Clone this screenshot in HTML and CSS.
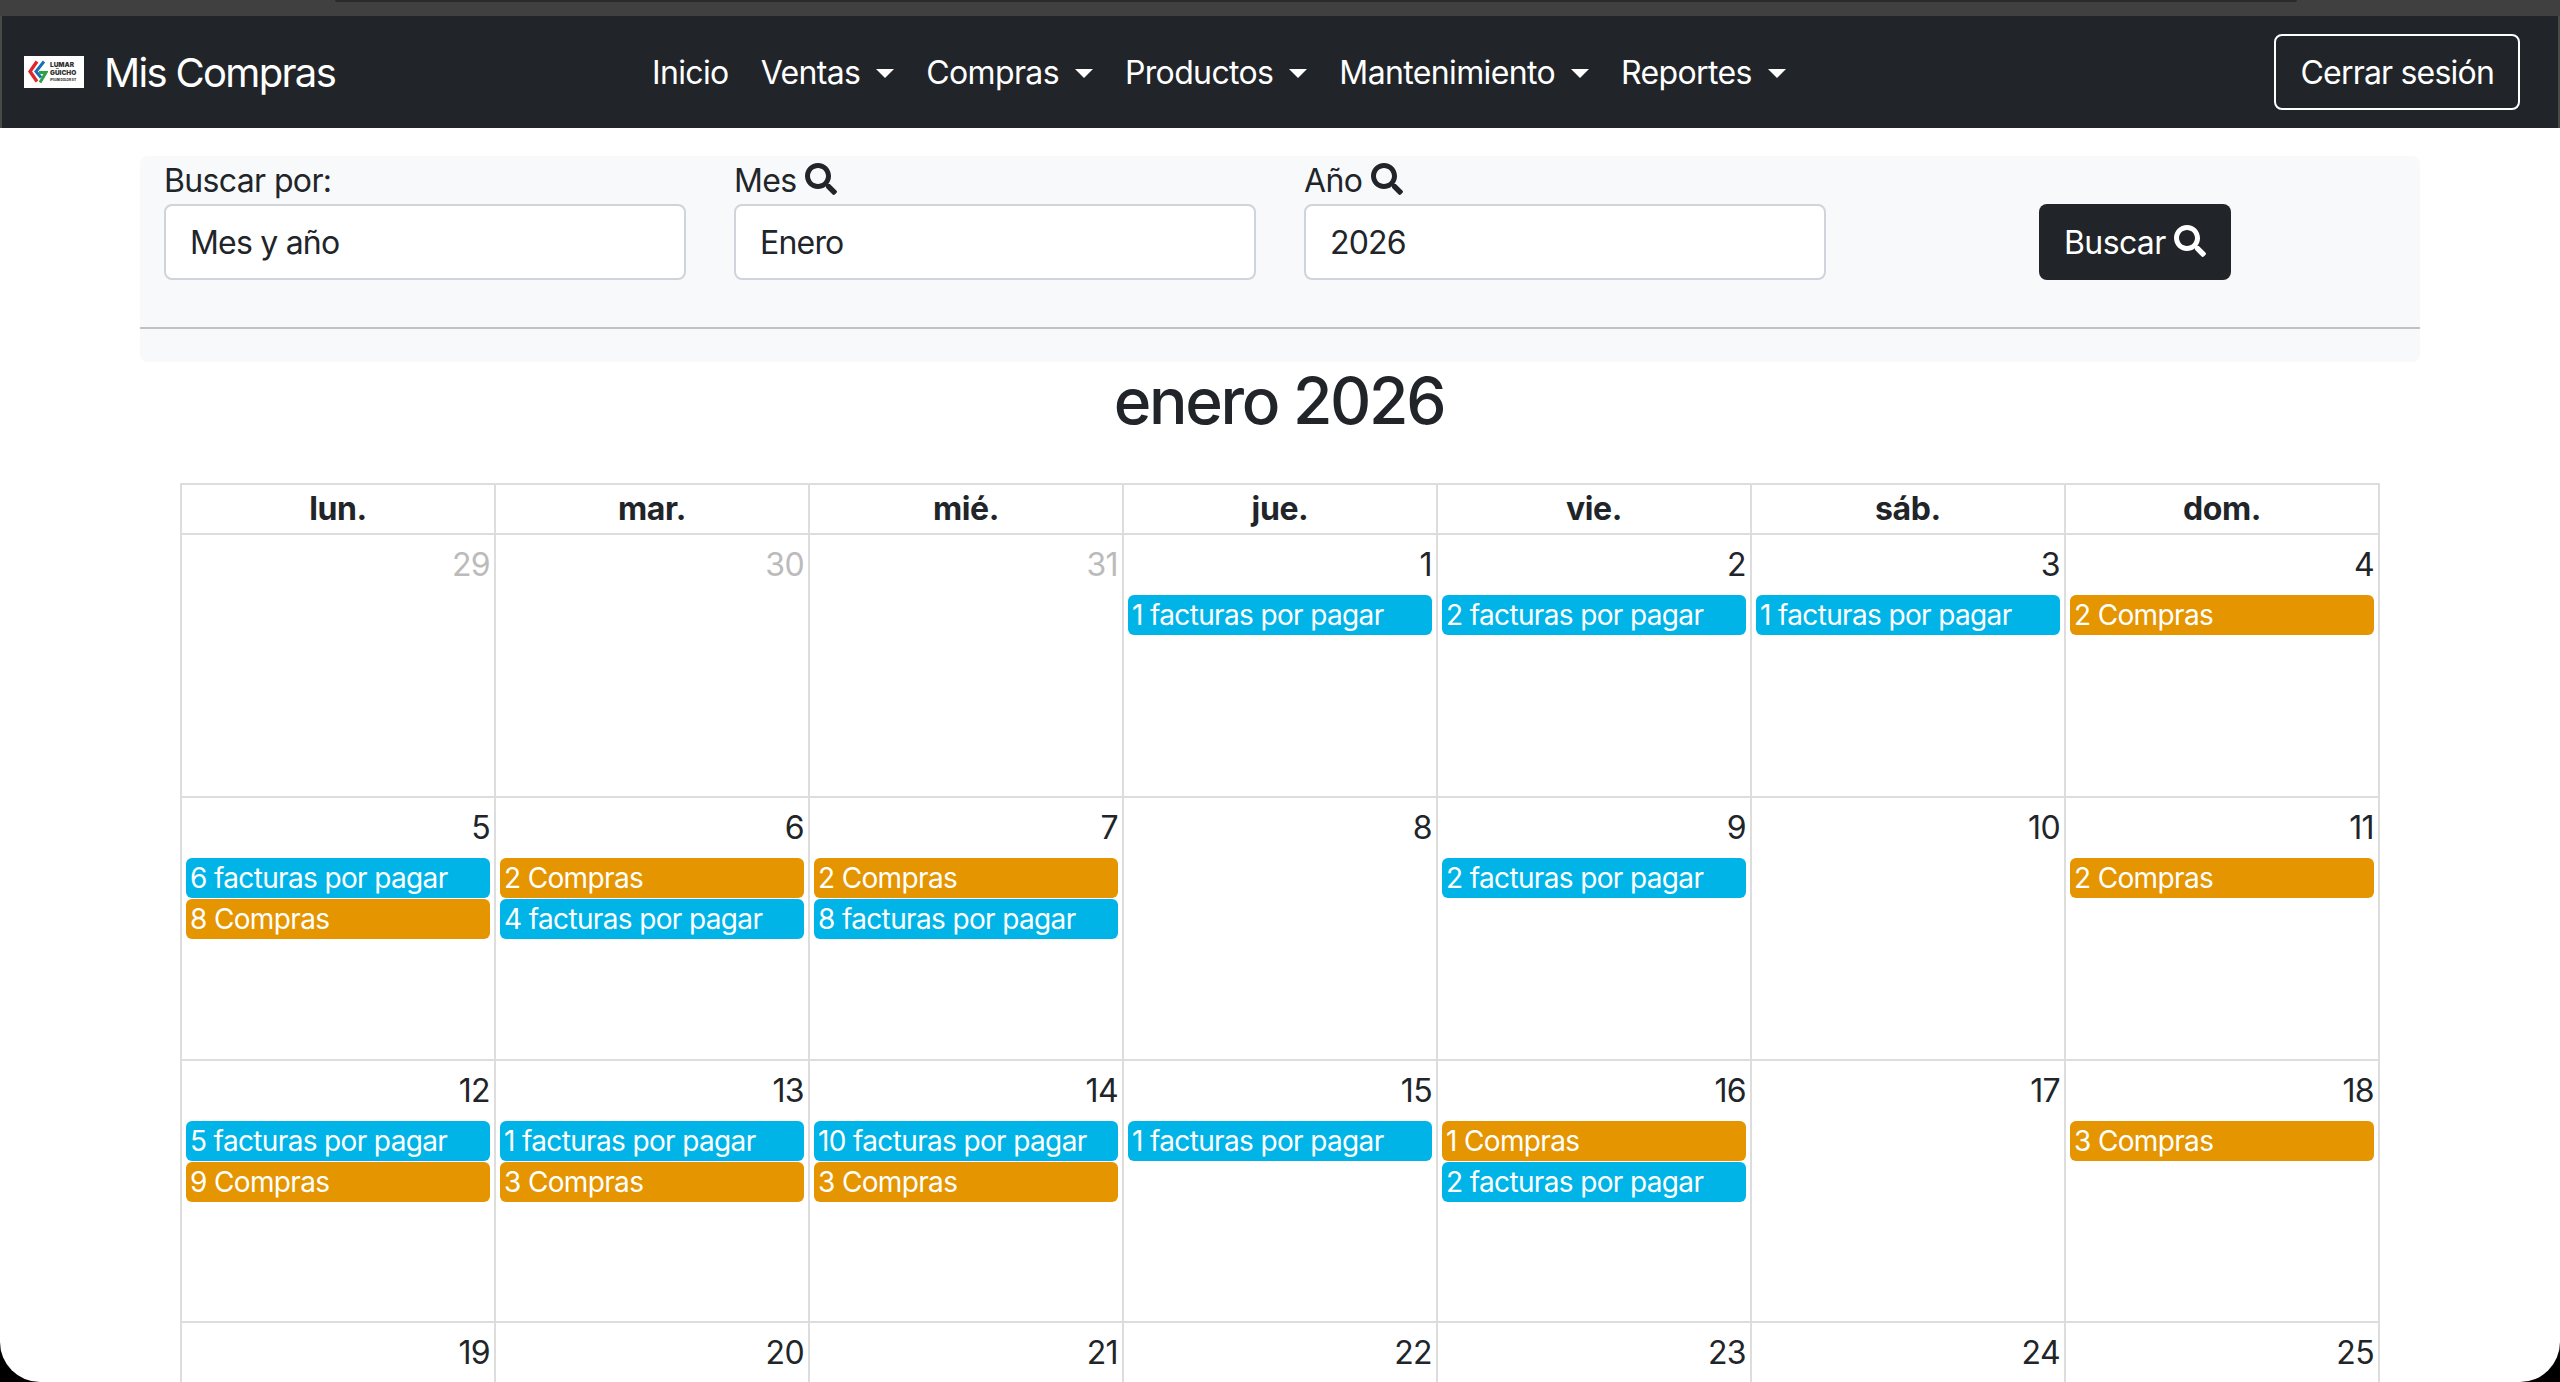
FILE: index.html
```html
<!DOCTYPE html>
<html lang="es">
<head>
<meta charset="utf-8">
<title>Mis Compras</title>
<link rel="stylesheet" href="styles.css">
</head>
<body>
<svg class="defs" width="0" height="0"><defs>
<symbol id="search" viewBox="0 0 512 512"><path d="M505 442.7L405.3 343c-4.5-4.5-10.6-7-17-7H372c27.6-35.3 44-79.7 44-128C416 93.1 322.9 0 208 0S0 93.1 0 208s93.1 208 208 208c48.3 0 92.7-16.4 128-44v16.3c0 6.4 2.5 12.5 7 17l99.7 99.7c9.4 9.4 24.6 9.4 33.9 0l28.3-28.3c9.4-9.4 9.4-24.6.1-34zM208 336c-70.7 0-128-57.2-128-128 0-70.7 57.2-128 128-128 70.7 0 128 57.2 128 128 0 70.7-57.2 128-128 128z" fill="currentColor"/></symbol>
</defs></svg>
<div class="screen">
  <div class="topstrip"><div class="notch"></div></div>
  <nav class="navbar">
    <a class="brand">
      <span class="logo">
        <svg class="logo-mark" viewBox="0 0 20 25"><path d="M9 2 2 12l7 10" fill="none" stroke="#e0262b" stroke-width="3.4"/><path d="M16 2 8 12l5 6" fill="none" stroke="#1a6fb5" stroke-width="3"/><path d="M11 13h7l-6 10" fill="none" stroke="#2ba34a" stroke-width="3"/></svg>
        <span class="logo-text"><b>LUMAR</b><b>GÜICHO</b><i>IPSUM DOLOR SIT</i></span>
      </span>
      <span class="brand-name">Mis Compras</span>
    </a>
    <ul class="menu">
      <li>Inicio</li>
      <li class="caret">Ventas</li>
      <li class="caret">Compras</li>
      <li class="caret">Productos</li>
      <li class="caret">Mantenimiento</li>
      <li class="caret">Reportes</li>
    </ul>
    <button class="logout">Cerrar sesión</button>
  </nav>
  <main class="container">
    <section class="panel">
      <div class="filters">
        <div class="field"><label>Buscar por:</label><div class="input">Mes y año</div></div>
        <div class="field"><label>Mes <svg class="ico"><use href="#search"/></svg></label><div class="input">Enero</div></div>
        <div class="field"><label>Año <svg class="ico"><use href="#search"/></svg></label><div class="input">2026</div></div>
        <div class="field action"><button class="search">Buscar <svg class="ico"><use href="#search"/></svg></button></div>
      </div>
      <hr class="rule">
    </section>
    <h2 class="title">enero 2026</h2>
    <div class="calendar">
      <div class="head">lun.</div><div class="head">mar.</div><div class="head">mié.</div><div class="head">jue.</div><div class="head">vie.</div><div class="head">sáb.</div><div class="head">dom.</div>

      <div class="day other"><span class="num">29</span></div>
      <div class="day other"><span class="num">30</span></div>
      <div class="day other"><span class="num">31</span></div>
      <div class="day"><span class="num">1</span><a class="ev blue">1 facturas por pagar</a></div>
      <div class="day"><span class="num">2</span><a class="ev blue">2 facturas por pagar</a></div>
      <div class="day"><span class="num">3</span><a class="ev blue">1 facturas por pagar</a></div>
      <div class="day"><span class="num">4</span><a class="ev orange">2 Compras</a></div>

      <div class="day"><span class="num">5</span><a class="ev blue">6 facturas por pagar</a><a class="ev orange">8 Compras</a></div>
      <div class="day"><span class="num">6</span><a class="ev orange">2 Compras</a><a class="ev blue">4 facturas por pagar</a></div>
      <div class="day"><span class="num">7</span><a class="ev orange">2 Compras</a><a class="ev blue">8 facturas por pagar</a></div>
      <div class="day"><span class="num">8</span></div>
      <div class="day"><span class="num">9</span><a class="ev blue">2 facturas por pagar</a></div>
      <div class="day"><span class="num">10</span></div>
      <div class="day"><span class="num">11</span><a class="ev orange">2 Compras</a></div>

      <div class="day"><span class="num">12</span><a class="ev blue">5 facturas por pagar</a><a class="ev orange">9 Compras</a></div>
      <div class="day"><span class="num">13</span><a class="ev blue">1 facturas por pagar</a><a class="ev orange">3 Compras</a></div>
      <div class="day"><span class="num">14</span><a class="ev blue">10 facturas por pagar</a><a class="ev orange">3 Compras</a></div>
      <div class="day"><span class="num">15</span><a class="ev blue">1 facturas por pagar</a></div>
      <div class="day"><span class="num">16</span><a class="ev orange">1 Compras</a><a class="ev blue">2 facturas por pagar</a></div>
      <div class="day"><span class="num">17</span></div>
      <div class="day"><span class="num">18</span><a class="ev orange">3 Compras</a></div>

      <div class="day"><span class="num">19</span></div>
      <div class="day"><span class="num">20</span></div>
      <div class="day"><span class="num">21</span></div>
      <div class="day"><span class="num">22</span></div>
      <div class="day"><span class="num">23</span></div>
      <div class="day"><span class="num">24</span></div>
      <div class="day"><span class="num">25</span></div>
    </div>
  </main>
</div>
</body>
</html>
```
FILE: styles.css
```css
* { box-sizing: border-box; }
html, body { margin: 0; height: 100%; background: #000; overflow: hidden; }
body { font-family: Inter, "Liberation Sans", sans-serif; font-size: 32px; line-height: 48px; letter-spacing: -0.02em; color: #212529; }
.defs { display: block; height: 0; }
.screen { height: 1382px; background: #fff; overflow: hidden; border-radius: 0 0 40px 40px; }
.topstrip { height: 16px; background: #404040; padding-left: 335px; }
.notch { width: 1962px; height: 2px; background: #2a2a2a; border-radius: 0 0 8px 8px; }
.navbar { height: 112px; background: #212529; color: #fff; display: flex; align-items: center; padding: 0 38px 0 22px; border: solid #4a4a4a; border-width: 0 2px; }
.brand { display: flex; align-items: center; gap: 20px; width: 628px; }
.logo { width: 60px; height: 32px; background: #fff; display: flex; align-items: center; padding: 2px 3px 2px 4px; gap: 2px; color: #333; letter-spacing: 0; }
.logo-mark { width: 20px; height: 26px; flex: none; }
.logo-text { display: flex; flex-direction: column; font-size: 6.5px; line-height: 8px; font-weight: 800; }
.logo-text b { display: block; }
.logo-text i { font-size: 3px; line-height: 7px; font-style: normal; white-space: nowrap; }
.brand-name { font-size: 40px; line-height: 60px; letter-spacing: -0.042em; padding-top: 2px; }
.menu { list-style: none; display: flex; margin: 0; padding: 2px 0 0; gap: 32px; flex: 1; }
.caret { display: flex; align-items: center; }
.caret::after { content: ""; margin-left: 16px; border-top: 9.6px solid #fff; border-left: 9.6px solid transparent; border-right: 9.6px solid transparent; }
.logout { font: inherit; letter-spacing: -0.025em; color: #fff; background: transparent; border: 2px solid #fff; border-radius: 8px; height: 76px; padding: 2px 24px 0; }
.container { width: 2280px; margin: 28px auto 0; }
.panel { background: #f8f9fa; border-radius: 8px; height: 206px; }
.filters { display: grid; grid-template-columns: repeat(4, 570px); padding-top: 1px; }
.field { padding: 0 24px; }
label { display: block; height: 47px; line-height: 48px; }
.input { height: 76px; background: #fff; border: 2px solid #ced4da; border-radius: 8px; padding: 0 24px; line-height: 74px; letter-spacing: -0.025em; }
.ico { width: 32px; height: 32px; vertical-align: -3px; }
.action { padding-top: 47px; padding-left: 189px; }
.search { font: inherit; letter-spacing: inherit; height: 76px; width: 192px; color: #fff; background: #212529; border: 0; border-radius: 8px; padding: 2px 0 0; }
.rule { margin: 47px 0 0; border: 0; border-top: 2px solid #c0c1c3; }
.title { font-size: 64px; line-height: 76px; font-weight: 500; letter-spacing: -0.036em; text-align: center; margin: 1px 0 0; padding-right: 2px; height: 120px; }
.calendar { width: 2200px; margin: 0 auto; display: grid; grid-template-columns: repeat(7, 1fr); grid-template-rows: 50px 263px 263px 262px 262px; border: solid #ddd; border-width: 2px 0 0 2px; }
.head { border: solid #ddd; border-width: 0 2px 2px 0; text-align: center; font-weight: 700; line-height: 48px; letter-spacing: -0.012em; }
.day { border: solid #ddd; border-width: 0 2px 2px 0; padding: 6px 4px; display: flex; flex-direction: column; }
.num { text-align: right; height: 48px; line-height: 48px; margin-bottom: 6px; }
.other .num { color: #bbb; }
.ev { height: 40px; margin-bottom: 1px; border-radius: 6px; padding: 0 4px; color: #fff; font-size: 28px; line-height: 40px; letter-spacing: -0.023em; white-space: nowrap; overflow: hidden; }
.blue { background: #00b4e8; }
.orange { background: #e59500; }
```
